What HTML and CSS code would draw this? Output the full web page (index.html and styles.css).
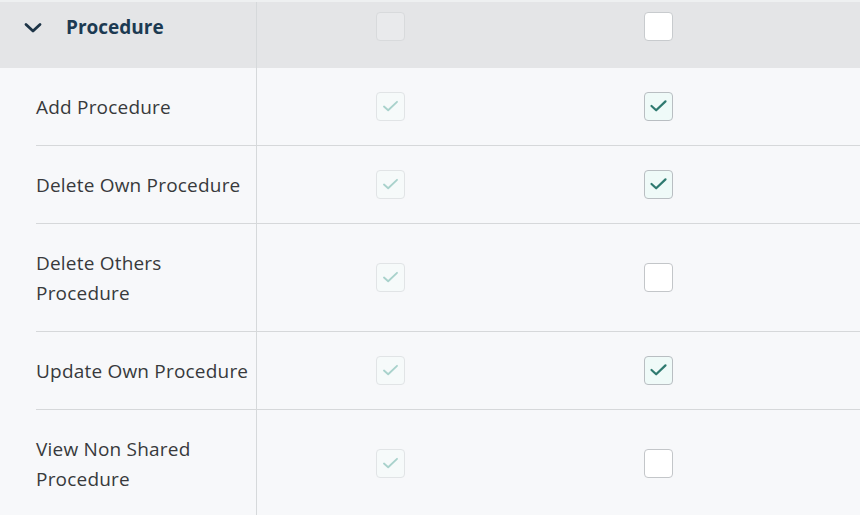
FILE: index.html
```html
<!DOCTYPE html>
<html>
<head>
<meta charset="utf-8">
<link rel="stylesheet" href="styles.css">
</head>
<body>
<div class="perm-table">
  <div class="group-head">
    <div class="head-label">
      <svg class="chevron" width="18" height="12" viewBox="0 0 18 12"><path d="M2 2.5 L9 9 L16 2.5" fill="none" stroke="#1d3447" stroke-width="2.8" stroke-linecap="round" stroke-linejoin="round"/></svg>
      <span class="head-title">Procedure</span>
    </div>
    <div class="cell"><span class="cb cb-head-disabled"></span></div>
    <div class="cell"><span class="cb cb-head"></span></div>
    <div></div>
  </div>
  <div class="rows">
    <div class="row">
      <div class="label">Add Procedure</div>
      <div class="cell"><span class="cb cb-disabled"><svg viewBox="0 0 29 29"><path d="M7.5 14.5 L12 18.5 L21.5 9.5"/></svg></span></div>
      <div class="cell"><span class="cb cb-checked"><svg viewBox="0 0 29 29"><path d="M7 14 L12 18.5 L22 9"/></svg></span></div>
      <div></div>
    </div>
    <div class="row">
      <div class="label">Delete Own Procedure</div>
      <div class="cell"><span class="cb cb-disabled"><svg viewBox="0 0 29 29"><path d="M7.5 14.5 L12 18.5 L21.5 9.5"/></svg></span></div>
      <div class="cell"><span class="cb cb-checked"><svg viewBox="0 0 29 29"><path d="M7 14 L12 18.5 L22 9"/></svg></span></div>
      <div></div>
    </div>
    <div class="row">
      <div class="label">Delete Others<br>Procedure</div>
      <div class="cell"><span class="cb cb-disabled"><svg viewBox="0 0 29 29"><path d="M7.5 14.5 L12 18.5 L21.5 9.5"/></svg></span></div>
      <div class="cell"><span class="cb cb-empty"></span></div>
      <div></div>
    </div>
    <div class="row">
      <div class="label">Update Own Procedure</div>
      <div class="cell"><span class="cb cb-disabled"><svg viewBox="0 0 29 29"><path d="M7.5 14.5 L12 18.5 L21.5 9.5"/></svg></span></div>
      <div class="cell"><span class="cb cb-checked"><svg viewBox="0 0 29 29"><path d="M7 14 L12 18.5 L22 9"/></svg></span></div>
      <div></div>
    </div>
    <div class="row last">
      <div class="label">View Non Shared<br>Procedure</div>
      <div class="cell"><span class="cb cb-disabled"><svg viewBox="0 0 29 29"><path d="M7.5 14.5 L12 18.5 L21.5 9.5"/></svg></span></div>
      <div class="cell"><span class="cb cb-empty"></span></div>
      <div></div>
    </div>
  </div>
</div>
</body>
</html>
```

FILE: styles.css
```css
html, body {
  margin: 0;
  padding: 0;
  background: #f7f8fa;
  font-family: "Open Sans", "Liberation Sans", sans-serif;
  overflow: hidden;
}

.perm-table {
  width: 860px;
}

.group-head {
  display: grid;
  grid-template-columns: 257px 267px 268px 1fr;
  height: 66px;
  background: #e4e5e7;
  border-top: 2px solid #eef0f1;
}

.head-label {
  display: flex;
  align-items: center;
  border-right: 1px solid #d6d9db;
  padding-left: 24px;
  padding-bottom: 14px;
}

.chevron {
  display: block;
  margin-top: 0;
}

.head-title {
  margin-left: 24px;
  font-weight: 700;
  font-size: 19px;
  color: #1c3a52;
  margin-top: -2px;
}

.rows {
  padding-left: 36px;
}

.row {
  display: grid;
  grid-template-columns: 221px 267px 268px 1fr;
  border-bottom: 1px solid #d6d8da;
  margin-right: -36px;
}

.row.last {
  border-bottom: none;
}

.label {
  border-right: 1px solid #d6d9db;
  padding: 24px 0 23px;
  font-size: 19px;
  line-height: 30px;
  color: #383a3c;
  letter-spacing: 0.2px;
}

.cell {
  display: flex;
  align-items: center;
  justify-content: center;
}

.group-head .cell {
  margin-top: -18px;
}

.cb {
  box-sizing: border-box;
  display: block;
  width: 29px;
  height: 29px;
  border-radius: 4px;
  border: 1px solid #c3c6c9;
  background: #ffffff;
}

.cb svg {
  display: block;
  width: 27px;
  height: 27px;
  margin: 0;
}

.cb svg path {
  fill: none;
  stroke-width: 2.4;
  stroke-linecap: round;
  stroke-linejoin: round;
}

.cb-head-disabled {
  background: #e9eaec;
  border-color: #d8dadc;
}

.cb-head {
  background: #ffffff;
  border-color: #c8cbce;
}

.cb-disabled {
  background: #f6fafa;
  border-color: #e1e4e6;
}

.cb-disabled svg path {
  stroke: #a9d2cc;
  stroke-width: 2;
}

.cb-checked {
  background: #effaf8;
  border-color: #b9bec2;
}

.cb-checked svg path {
  stroke: #2f7a70;
}

.cb-empty {
  background: #ffffff;
  border-color: #c3c6c9;
}
```
